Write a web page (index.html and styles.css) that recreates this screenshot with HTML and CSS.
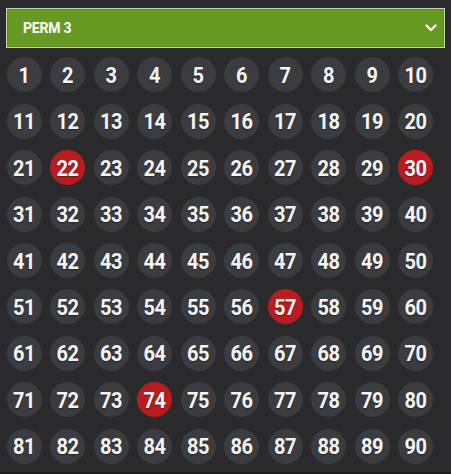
FILE: index.html
```html
<!DOCTYPE html>
<html>
<head>
<meta charset="utf-8">
<link rel="stylesheet" href="styles.css">
</head>
<body>
<div class="page">
  <div class="select">
    <span class="select-label">PERM 3</span>
    <svg class="chevron" width="12" height="8" viewBox="0 0 12 8"><path d="M1.5 1.5 L6 6 L10.5 1.5" fill="none" stroke="#ffffff" stroke-width="2.2" stroke-linecap="round" stroke-linejoin="round"/></svg>
  </div>
  <div class="grid" id="grid"></div>
</div>
<script>
  var picked = [22, 30, 57, 74];
  var g = document.getElementById('grid');
  for (var i = 1; i <= 90; i++) {
    var c = document.createElement('div');
    c.className = 'cell';
    var b = document.createElement('div');
    b.className = 'ball' + (picked.indexOf(i) >= 0 ? ' picked' : '');
    var s = document.createElement('span');
    s.className = 'num';
    s.textContent = i;
    b.appendChild(s);
    c.appendChild(b);
    g.appendChild(c);
  }
</script>
</body>
</html>
```
FILE: styles.css
```css
html, body {
  margin: 0;
  padding: 0;
  background: #2a2a2c;
}
.page {
  width: 451px;
  height: 474px;
  overflow: hidden;
  box-sizing: border-box;
  border-bottom: 2px solid #1c1c1d;
  font-family: Roboto, "Liberation Sans", sans-serif;
}
.select {
  margin: 8px 6px 0 6px;
  height: 40px;
  box-sizing: border-box;
  border: 1px solid #c9d6b4;
  background: #679a22;
  display: flex;
  align-items: center;
  justify-content: space-between;
  padding: 0 7px 0 16px;
  box-shadow: inset 0 0 0 1px #5d8a1e;
}
.select-label {
  color: #ffffff;
  font-weight: 700;
  font-size: 14px;
  letter-spacing: -0.2px;
}
.chevron {
  display: block;
}
.grid {
  display: grid;
  grid-template-columns: repeat(10, 43.5px);
  grid-template-rows: repeat(9, 46.4px);
  margin: 3.8px 0 0 2.25px;
}
.cell {
  display: flex;
  align-items: center;
  justify-content: center;
}
.ball {
  width: 35px;
  height: 35px;
  border-radius: 50%;
  background: #3b3c3f;
  color: #f4f4f4;
  font-weight: 700;
  font-size: 20px;
  display: flex;
  align-items: center;
  justify-content: center;
  letter-spacing: -0.4px;
  text-shadow: 0 1px 1px rgba(0,0,0,0.4);
}
.num {
  display: inline-block;
  transform: scaleY(1.08);
}
.ball.picked {
  background: #b71c20;
}
```
